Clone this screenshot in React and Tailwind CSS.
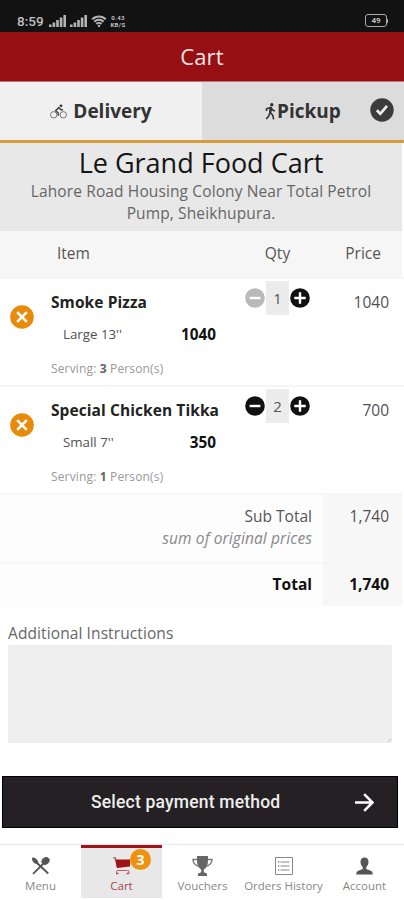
import { useState } from 'react';

const itens = [
  { id: 1, name: 'Smoke Pizza', size: "Large 13''", unit: '1040', serving: 3, qty: 1, price: '1040' },
  { id: 2, name: 'Special Chicken Tikka', size: "Small 7''", unit: '350', serving: 1, qty: 2, price: '700' },
];

// --- ICONS ---
const Signal = () => (
  <svg width="17" height="12" viewBox="0 0 17 12" fill="#b4b4b4">
    <path d="M0 9.5h2.6V12H0zM3.6 7.5h2.6V12H3.6zM7.2 5h2.6v7H7.2zM10.8 2.5h2.6V12h-2.6zM14.4 0H17v12h-2.6z" />
  </svg>
);

const Wifi = () => (
  <svg width="16" height="12" viewBox="0 0 15 12" fill="none" stroke="#b4b4b4" strokeWidth="2">
    <path d="M.7 4.2a9.6 9.6 0 0 1 13.6 0M2.8 6.7a6.6 6.6 0 0 1 9.4 0M4.9 9a3.7 3.7 0 0 1 5.2 0" />
    <circle cx="7.5" cy="11" r="1.2" fill="#b4b4b4" stroke="none" />
  </svg>
);

const Bike = () => (
  <svg width="17" height="15" viewBox="0 0 17 15" fill="none" stroke="#777" strokeWidth="1">
    <circle cx="3.7" cy="10.8" r="3.2" />
    <circle cx="13.3" cy="10.8" r="3.2" />
    <path d="M8.3 11.8V9L5.6 6.8l3.2-3.2 2.1 2.2h2.2" stroke="#444" strokeWidth="1.5" />
    <circle cx="11" cy="1.8" r="1.4" fill="#333" stroke="none" />
  </svg>
);

const Walk = () => (
  <svg width="11" height="17" viewBox="0 0 11 17" fill="none" stroke="#333" strokeWidth="1.6" strokeLinejoin="round">
    <circle cx="6.8" cy="1.8" r="1.7" fill="#333" stroke="none" />
    <path d="M6 4.5 5 9.8M1.5 8V5.7L5.8 4.4 7.5 7l2.5 1M5 9.5 3.8 13l-2.6 3M5.2 9.5l2.6 2.8.8 4" />
    <path d="m6 4.5-.8 5" strokeWidth="2.4" />
  </svg>
);

const Check = () => (
  <svg width="24" height="24" viewBox="0 0 24 24">
    <circle cx="12" cy="12" r="11.7" fill="#3b3b3b" />
    <path d="m6.8 12.3 3.5 3.5 6.7-8" fill="none" stroke="#eee" strokeWidth="2.7" />
  </svg>
);

const Remove = () => (
  <svg width="24" height="24" viewBox="0 0 24 24">
    <circle cx="12" cy="12" r="11.8" fill="#e88b0b" />
    <path d="m7.2 7.2 9.6 9.6M16.8 7.2l-9.6 9.6" stroke="#fff" strokeWidth="2.6" />
  </svg>
);

const Round = ({ plus, off }) => (
  <svg width="20" height="20" viewBox="0 0 20 20">
    <circle cx="10" cy="10" r="9.8" fill={off ? '#b9b9b9' : '#111'} />
    <path d={plus ? 'M4.3 10h11.4M10 4.3v11.4' : 'M4.6 10h10.8'} stroke="#fff" strokeWidth="2.4" />
  </svg>
);

const Arrow = () => (
  <svg width="19" height="19" viewBox="0 0 19 19" fill="none" stroke="#fff" strokeWidth="2.6">
    <path d="M0 9.5h17M9.2 1.2l8.3 8.3-8.3 8.3" />
  </svg>
);

const MenuIcon = () => (
  <svg width="19" height="18" viewBox="0 0 19 18" fill="#555">
    <path d="M1.2.5C3.5.2 6 2 7 4.3c.5 1.2.1 2.2-.4 2.5-.8.5-2 .2-3-.5C1.5 4.8.5 2.5 1.2.5z" />
    <path d="M6 6 17.2 16.5" stroke="#555" strokeWidth="2" />
    <path d="M2 16.8 12 7" stroke="#555" strokeWidth="1.8" />
    <ellipse cx="14.5" cy="4" rx="4.3" ry="3.5" transform="rotate(-40 14.5 4)" />
  </svg>
);

const CartIcon = () => (
  <svg width="17" height="18" viewBox="0 0 17 18">
    <path d="M.3.8h2l2 9.7" fill="none" stroke="#a5474b" strokeWidth="1.2" />
    <path d="M2.5 2.5H17V9.5L4 11z" fill="#a01216" />
    <path d="M3.5 16.5v-2q0-1 1.5-1h9.5q1.5 0 1.5 1v2" fill="none" stroke="#c05c60" strokeWidth="1" />
    <path d="M3 16.5h2.5M13.5 16.5H16" stroke="#b24e52" strokeWidth="1.5" />
  </svg>
);

const Trophy = () => (
  <svg width="21" height="20" viewBox="0 0 21 20" fill="#666">
    <path d="M5 0h11v5c0 4-1.7 7.3-4.2 8.5v2.7l3.2 1.3V20H6v-2.5l3.2-1.3v-2.7C6.7 12.3 5 9 5 5z" />
    <path d="M5.5 3.5H1q0 5.5 6.5 7M15.5 3.5H20q0 5.5-6.5 7" fill="none" stroke="#777" strokeWidth="1.4" />
  </svg>
);

const Orders = () => (
  <svg width="18" height="18" viewBox="0 0 18 18" fill="none" stroke="#888" strokeWidth="1">
    <path d="M.5.5h17v17H.5zM5.5 5h9M5.5 9h9M5.5 13h9" />
    <path d="M3 5h1.3M3 9h1.3M3 13h1.3" strokeWidth="1.5" />
  </svg>
);

const Person = () => (
  <svg width="17" height="18" viewBox="0 0 17 17" fill="#555">
    <path d="M8.5 0c2.7 0 4 1.7 4 4.3 0 2.3-1 4.3-2.2 5.3v2l5 2q1.5.7 1.5 3.4H.2q0-2.7 1.5-3.4l5-2v-2c-1.2-1-2.2-3-2.2-5.3C4.5 1.7 5.8 0 8.5 0z" />
  </svg>
);

const abas = [
  { name: 'Menu', icon: MenuIcon },
  { name: 'Cart', icon: CartIcon },
  { name: 'Vouchers', icon: Trophy },
  { name: 'Orders History', icon: Orders },
  { name: 'Account', icon: Person },
];

export default function App() {
  const [aba, setAba] = useState('Cart');

  return (
    <div className="flex h-[900px] w-[404px] flex-col overflow-hidden bg-white font-['Open_Sans',sans-serif] text-[#505050]">
      {/* STATUS BAR */}
      <div className="flex h-8 shrink-0 items-center bg-[#121212] pt-[9px] pl-[17px] font-['Roboto',sans-serif] text-[#c2c2c2]">
        <span className="w-[32px] text-[13.5px] leading-3 font-medium">8:59</span>
        <div className="flex items-center gap-[4px]">
          <Signal />
          <Signal />
          <Wifi />
          <div className="-ml-px w-[16px] text-center text-[6px] leading-[7px] font-bold tracking-[0.4px]"><p>0.43</p><p>KB/S</p></div>
        </div>
        <div className="mr-[16px] ml-auto flex items-center">
          <span className="flex h-[13px] w-[22px] items-center justify-center rounded-[3px] border border-[#aaa] text-[8px] font-bold">49</span>
          <span className="h-1 w-px bg-[#aaa]" />
        </div>
      </div>

      <header className="flex h-[50px] shrink-0 items-center justify-center border-b border-[#b77] bg-[#960f12] text-[22px] font-medium text-[#f5e5e5]">
        <h1 className="tracking-[0.2px]">Cart</h1>
      </header>

      {/* DELIVERY / PICKUP */}
      <div className="flex h-[61px] shrink-0 border-b-[3px] border-[#d69b3b] text-[19px] font-bold text-[#333]">
        <button className="flex w-[202px] items-center justify-center gap-[6px] bg-[#f0f0f0]"><Bike />Delivery</button>
        <button className="flex flex-1 items-center bg-[#dcdcdc] pl-[63px]">
          <Walk />
          <span className="ml-px">Pickup</span>
          <span className="mr-[10px] ml-auto pb-[2px]"><Check /></span>
        </button>
      </div>

      <section className="mr-[2px] h-[88px] shrink-0 bg-[#e8e8e8] pt-[2px] text-center">
        <h2 className="text-[27px] leading-[35px] text-[#151515]">Le Grand Food Cart</h2>
        <p className="text-[15.5px] leading-[22px] tracking-[0.12px] text-[#666]">Lahore Road Housing Colony Near Total Petrol<br />Pump, Sheikhupura.</p>
      </section>

      {/* ITEMS */}
      <div className="mr-[2px] flex h-[46px] shrink-0 items-center bg-[#f6f6f6] text-[15.5px] text-[#555]">
        <span className="w-[243px] pl-[57px]">Item</span>
        <span className="w-[69px] text-center">Qty</span>
        <span className="ml-auto pr-[21px]">Price</span>
      </div>
      {itens.map(item => (
        <div key={item.id} className="flex h-[108px] shrink-0 border-t-2 border-[#f5f5f5]">
          <button className="mt-[26px] ml-[10px] h-6 w-6"><Remove /></button>
          <div className="ml-[17px] w-[194px] pt-[12px]">
            <p className="text-[15.5px] leading-[22px] font-bold tracking-[0.08px] whitespace-nowrap text-[#222]">{item.name}</p>
            <div className="mt-[10px] flex justify-between pr-[29px] pl-[12px] leading-[22px]">
              <span className="text-[13.3px]">{item.size}</span>
              <span className="text-[15.3px] font-bold text-[#111]">{item.unit}</span>
            </div>
            <p className="mt-[15px] text-[12px] leading-[18px] tracking-[0.15px] text-[#999]">Serving: <b className="text-[#666]">{item.serving}</b> Person(s)</p>
          </div>
          <div className="mt-[2px] flex h-[34px] items-center">
            <Round off={item.qty === 1} />
            <span className="mx-px flex h-[34px] w-[23px] items-center justify-center bg-[#ececec] text-[15px] text-[#555]">{item.qty}</span>
            <Round plus />
          </div>
          <span className="mt-[12px] mr-[15px] ml-auto text-[15.5px] leading-[22px]">{item.price}</span>
        </div>
      ))}

      {/* TOTALS */}
      <div className="mr-[2px] flex h-[69px] shrink-0 border-t-2 border-[#f6f6f6] bg-[#fdfdfd] text-[15.5px] leading-[22px]">
        <div className="flex-1 pt-[10px] pr-[11px] text-right">
          <p className="text-[#555]">Sub Total</p>
          <p className="text-[15.5px] tracking-[0.1px] text-[#888] italic">sum of original prices</p>
        </div>
        <span className="w-[79px] bg-[#f7f7f7] pt-[10px] pr-[13px] text-right">1,740</span>
      </div>
      <div className="mr-[2px] flex h-[44px] shrink-0 border-t-2 border-[#f6f6f6] bg-[#fdfdfd] text-[15.5px] leading-[22px] font-bold text-[#111]">
        <span className="flex-1 pt-[9px] pr-[11px] text-right">Total</span>
        <span className="w-[79px] bg-[#f7f7f7] pt-[9px] pr-[13px] text-right">1,740</span>
      </div>

      <div className="mt-[16px] shrink-0 pr-[12px] pl-2">
        <label htmlFor="notes" className="block h-[22px] text-[15.5px] leading-[22px] tracking-[0.1px] text-[#666]">Additional Instructions</label>
        <div className="relative mt-px">
          <textarea id="notes" className="block h-[98px] w-full resize-none rounded-[1px] bg-[#eee] outline-none" />
          <svg className="absolute right-px bottom-px" width="3" height="3" viewBox="0 0 4 4" stroke="#aaa"><path d="M0 4 4 0" /></svg>
        </div>
      </div>

      <button className="mt-[33px] ml-[2px] flex h-[52px] w-[396px] shrink-0 items-center border border-black bg-[#242023] pr-[23px] font-['Roboto',sans-serif] text-[17.5px] font-medium text-[#eee]">
        <span className="ml-[88px] tracking-[0.19px]">Select payment method</span>
        <span className="ml-auto"><Arrow /></span>
      </button>

      {/* BOTTOM NAV */}
      <nav className="mt-auto flex h-[56px] shrink-0 border-t border-[#e8e8e8]">
        {abas.map(({ name, icon: Icon }) => (
          <button
            key={name}
            onClick={() => setAba(name)}
            className={`relative flex h-[53px] w-[81px] shrink-0 flex-col items-center text-[11.5px] whitespace-nowrap ${aba === name ? 'border-t-[3px] border-[#a31217] bg-[#e8e8e8] text-[#a5474b]' : 'pt-[3px] text-[#888]'}`}
          >
            <span className="mt-[8px] flex h-[20px] items-center"><Icon /></span>
            <span className="mt-[2px] leading-[16px]">{name}</span>
            {name === 'Cart' && <span className="absolute top-[1px] left-[49px] flex h-[21px] w-[21px] items-center justify-center rounded-full bg-[#ee920f] text-[14px] font-bold text-white">3</span>}
          </button>
        ))}
      </nav>
    </div>
  );
}
